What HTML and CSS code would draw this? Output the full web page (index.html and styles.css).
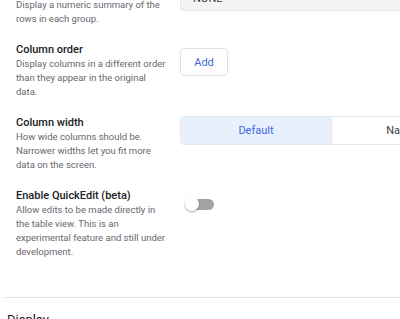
FILE: index.html
```html
<!DOCTYPE html>
<html>
<head>
<meta charset="utf-8">
<link rel="stylesheet" href="styles.css">
</head>
<body>
<div class="page">
  <div class="settings">
    <div class="row">
      <div class="info">
        <div class="title">Summary</div>
        <div class="desc">Display a numeric summary of the rows in each group.</div>
      </div>
      <div class="control">
        <div class="select">NONE</div>
      </div>
    </div>
    <div class="row">
      <div class="info">
        <div class="title">Column order</div>
        <div class="desc">Display columns in a different order than they appear in the original data.</div>
      </div>
      <div class="control">
        <button class="btn">Add</button>
      </div>
    </div>
    <div class="row">
      <div class="info">
        <div class="title">Column width</div>
        <div class="desc">How wide columns should be. Narrower widths let you fit more data on the screen.</div>
      </div>
      <div class="control">
        <div class="segmented">
          <div class="seg seg--active">Default</div>
          <div class="seg seg--second">Narrow</div>
        </div>
      </div>
    </div>
    <div class="row">
      <div class="info">
        <div class="title">Enable QuickEdit (beta)</div>
        <div class="desc">Allow edits to be made directly in the table view. This is an experimental feature and still under development.</div>
      </div>
      <div class="control">
        <div class="toggle"><div class="knob"></div></div>
      </div>
    </div>
  </div>
  <div class="divider"></div>
  <div class="section-title">Display</div>
</div>
</body>
</html>
```
FILE: styles.css
```css
html, body {
  margin: 0;
  padding: 0;
  background: #ffffff;
  overflow: hidden;
}
body {
  font-family: Roboto, "Noto Sans", sans-serif;
  width: 400px;
  height: 319px;
}
.page {
  display: flex;
  flex-direction: column;
}
.settings {
  display: flex;
  flex-direction: column;
  gap: 17px;
  margin-top: -16px;
  padding: 0 0 38px 16px;
}
.row {
  display: flex;
  gap: 14px;
}
.info {
  width: 150px;
  flex: none;
}
.title {
  font-size: 11px;
  font-weight: 500;
  line-height: 14px;
  color: #202124;
}
.desc {
  font-size: 9.5px;
  line-height: 14px;
  color: #6b6570;
}
.control {
  flex: 1;
  display: flex;
  align-items: flex-start;
}
.select {
  width: 260px;
  height: 27px;
  box-sizing: border-box;
  background: #f1f3f4;
  border: 1px solid #e3e4e6;
  border-radius: 4px;
  font-size: 11px;
  line-height: 27px;
  padding-left: 12px;
  color: #3c4043;
  flex: none;
}
.btn {
  margin-top: 5px;
  width: 48px;
  height: 28px;
  background: #ffffff;
  border: 1px solid #e1e3e6;
  border-radius: 4px;
  color: #3f68e0;
  font-family: Roboto, sans-serif;
  font-size: 11px;
  padding: 0;
}
.segmented {
  display: flex;
  flex: none;
  width: 320px;
  height: 29px;
  box-sizing: border-box;
  border: 1px solid #e6e8eb;
  border-radius: 4px;
  overflow: hidden;
}
.seg {
  width: 150px;
  flex: none;
  display: flex;
  align-items: center;
  justify-content: center;
  font-size: 11px;
  color: #3c4043;
  background: #ffffff;
  border-left: 1px solid #e6e8eb;
}
.seg--second {
  width: 144px;
}
.seg--active {
  background: #e8f0fe;
  color: #3f68e0;
  border-left: none;
}
.toggle {
  margin-top: 10px;
  margin-left: 8px;
  width: 26px;
  height: 11px;
  border-radius: 6px;
  background: #a3a3a3;
  position: relative;
}
.knob {
  position: absolute;
  left: -3px;
  top: -2px;
  width: 14px;
  height: 14px;
  border-radius: 50%;
  background: #ffffff;
  box-shadow: 0 1px 2px rgba(0,0,0,0.35);
}
.divider {
  height: 1px;
  background: #e4e4e4;
  margin-left: 4px;
}
.section-title {
  margin-top: 14px;
  padding-left: 7px;
  font-size: 13px;
  color: #202124;
  line-height: 16px;
}
```
